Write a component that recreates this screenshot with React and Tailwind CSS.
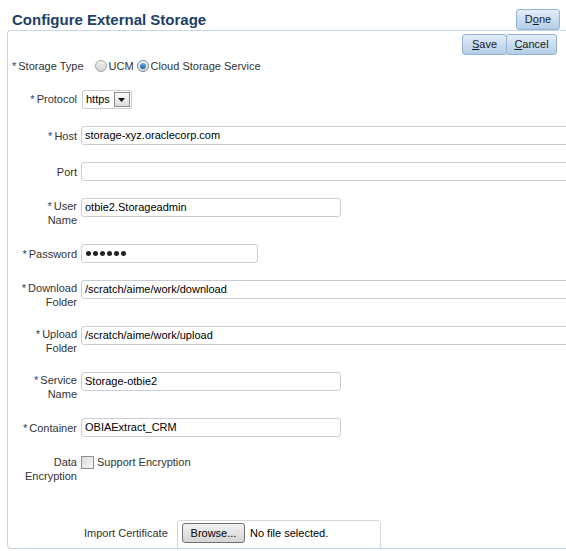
import React from "react";

const font = { fontFamily: '"Liberation Sans", Arial, sans-serif' };

function Star() {
  return <span className="text-[#1f3f6a] mr-[2px]">*</span>;
}

function BlueButton({ children, className = "" }) {
  return (
    <div
      className={
        "h-[21px] flex items-center justify-center border border-[#94b2d1] rounded-[3px] bg-gradient-to-b from-[#e3eef9] to-[#b3cde7] text-[11px] text-[#1a1a1a] " +
        className
      }
    >
      {children}
    </div>
  );
}

function Row({ lines, required, children, pad = 3 }) {
  const two = lines.length > 1;
  return (
    <div className="flex items-start gap-[4px]">
      <div
        className={
          "w-[69px] shrink-0 text-right leading-[14px] text-[#333] " +
          (two ? "h-[29px] pt-[1px]" : "h-[19px]")
        }
        style={two ? undefined : { paddingTop: pad }}
      >
        {lines.map((l, i) => (
          <div key={i}>
            {i === 0 && required ? <Star /> : null}
            {l}
          </div>
        ))}
      </div>
      {children}
    </div>
  );
}

function Input({ value, w }) {
  return (
    <div
      className="h-[19px] shrink-0 border border-[#c9ced6] rounded-[3px] px-[3px] leading-[17px] text-black bg-white whitespace-nowrap"
      style={{ width: w }}
    >
      {value}
    </div>
  );
}

export default function App() {
  return (
    <div
      className="w-[566px] h-[551px] overflow-hidden bg-white text-[11px] text-[#333]"
      style={font}
    >
      <div className="flex justify-between items-start h-[30px] pt-[9px] pl-[12px] pr-[6px]">
        <div className="text-[15px] font-bold leading-[21px] text-[#1d3e66]">
          Configure External Storage
        </div>
        <BlueButton className="w-[44px]">
          <span>
            D<span className="underline">o</span>ne
          </span>
        </BlueButton>
      </div>

      <div className="ml-[7px] h-[519px] border-l border-t border-b border-[#c6d6e5] rounded-tl-[4px] rounded-bl-[4px] overflow-hidden flex flex-col">
        <div className="flex justify-end pr-[9px] pt-[3px]">
          <BlueButton className="w-[45px]">
            <span>
              <span className="underline">S</span>ave
            </span>
          </BlueButton>
          <BlueButton className="w-[51px] ml-[-1px]">
            <span>
              <span className="underline">C</span>ancel
            </span>
          </BlueButton>
        </div>

        <div className="flex flex-col gap-[17px] mt-[4px]">
          <div className="flex items-center h-[14px] pl-[4px] leading-[14px]">
            <Star />
            <span>Storage Type</span>
            <span className="ml-[11px] w-[12px] h-[12px] rounded-full border border-[#a5a5a5] bg-gradient-to-b from-[#f2f2f2] to-[#d2d2d2]" />
            <span className="ml-[2px]">UCM</span>
            <span className="ml-[3px] w-[12px] h-[12px] rounded-full border border-[#7d8a98] bg-gradient-to-b from-[#f6f6f6] to-[#d8d8d8] flex items-center justify-center">
              <span className="w-[6px] h-[6px] rounded-full bg-gradient-to-b from-[#6fb2ea] to-[#1a5f9e]" />
            </span>
            <span className="ml-[2px]">Cloud Storage Service</span>
          </div>

          <Row lines={["Protocol"]} required pad={2}>
            <div className="flex items-center h-[19px] border border-[#c9ced6] rounded-[2px] pl-[3px] pr-[1px] ml-[1px] bg-white">
              <span className="text-black mr-[4px] leading-[17px]">https</span>
              <span className="w-[16px] h-[15px] border border-[#8a8a8a] bg-gradient-to-b from-[#fafafa] to-[#dcdcdc] flex items-center justify-center">
                <svg width="7" height="4" viewBox="0 0 7 4">
                  <path d="M0 0H7L3.5 4Z" fill="#111" />
                </svg>
              </span>
            </div>
          </Row>

          <Row lines={["Host"]} required>
            <Input value="storage-xyz.oraclecorp.com" w={520} />
          </Row>

          <Row lines={["Port"]}>
            <Input value="" w={520} />
          </Row>

          <Row lines={["User", "Name"]} required>
            <Input value="otbie2.Storageadmin" w={260} />
          </Row>

          <Row lines={["Password"]} required>
            <div className="h-[19px] w-[177px] shrink-0 border border-[#c9ced6] rounded-[3px] pl-[4px] flex items-center gap-[2px]">
              {[0, 1, 2, 3, 4, 5].map((i) => (
                <span key={i} className="w-[5px] h-[5px] rounded-full bg-[#222]" />
              ))}
            </div>
          </Row>

          <Row lines={["Download", "Folder"]} required>
            <Input value="/scratch/aime/work/download" w={520} />
          </Row>

          <Row lines={["Upload", "Folder"]} required>
            <Input value="/scratch/aime/work/upload" w={520} />
          </Row>

          <Row lines={["Service", "Name"]} required>
            <Input value="Storage-otbie2" w={260} />
          </Row>

          <Row lines={["Container"]} required>
            <Input value="OBIAExtract_CRM" w={260} />
          </Row>

          <Row lines={["Data", "Encryption"]}>
            <div className="flex items-center h-[14px] mt-[1px]">
              <span className="w-[13px] h-[13px] border border-[#8f8f8f] bg-gradient-to-br from-[#dcdcdc] to-[#f7f7f7] mt-[1px]" />
              <span className="ml-[3px] leading-[14px]">Support Encryption</span>
            </div>
          </Row>

          <div className="flex items-start mt-[20px] pl-[76px]">
            <div className="pt-[6px] leading-[14px] w-[93px] shrink-0">Import Certificate</div>
            <div className="w-[204px] h-[32px] shrink-0 border border-[#d3d7dd] rounded-[3px] pl-[4px] pt-[2px] flex items-start">
              <div className="w-[63px] h-[20px] border border-[#707070] rounded-[3px] bg-gradient-to-b from-[#f2f2f2] to-[#d4d4d4] flex items-center justify-center text-black">
                Browse...
              </div>
              <span className="ml-[5px] leading-[20px] text-black">No file selected.</span>
            </div>
          </div>
        </div>
      </div>
    </div>
  );
}
